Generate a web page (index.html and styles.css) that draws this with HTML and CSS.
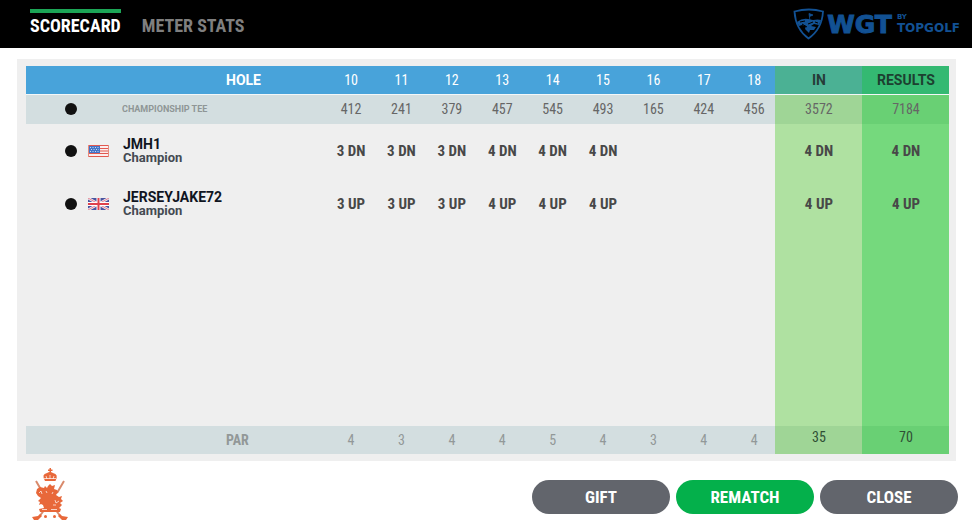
FILE: index.html
```html
<!DOCTYPE html>
<html lang="en">
<head>
    <meta charset="UTF-8">
    <meta name="viewport" content="width=device-width, initial-scale=1.0">
    <title>Scorecard</title>
    <link rel="stylesheet" href="styles.css">
</head>
<body>

    <!-- Top bar -->
    <header class="topbar">
        <nav class="tabs">
            <a class="tab active" href="#scorecard">SCORECARD</a>
            <a class="tab" href="#meter">METER STATS</a>
        </nav>
        <div class="logo">
            <svg class="shield" viewBox="0 0 32 32" width="32" height="32" aria-hidden="true">
                <path d="M1.500 3.500Q16 -.5 30 3.500Q29 21 15.500 30.500Q2.500 21 1.500 3.500Z" fill="none" stroke="#125193" stroke-width="1.800"/>
                <path d="M4 14Q9 10 15 11L20 12Q25 11 28 12L26 17L21 16L18 18L23 19L21 22L17 22L16 25L12 21L13 18L9 17L6 18Z" fill="#125193"/>
                <path d="M7 14L12 13M15 16L20 14M9 16L14 19M22 14L25 15" stroke="#000" stroke-width="1"/>
                <path d="M17 13L16 5.500L20 7L16.500 8.500" fill="#125193" stroke="#125193" stroke-width=".8"/>
            </svg>
            <span class="wgt">WGT</span>
            <span class="by"><small>BY</small>TOPGOLF</span>
        </div>
    </header>

    <!-- Scorecard table -->
    <main class="panel" id="scorecard">
        <table class="card">
            <colgroup>
                <col class="col-label">
                <col class="col-hole" span="9">
                <col class="col-total" span="2">
            </colgroup>
            <thead>
                <tr class="holes">
                    <th class="title">HOLE</th>
                    <th>10</th><th>11</th><th>12</th><th>13</th><th>14</th><th>15</th><th>16</th><th>17</th><th>18</th>
                    <th class="in">IN</th>
                    <th class="results">RESULTS</th>
                </tr>
            </thead>
            <tbody>
                <tr class="tee">
                    <th><div class="who"><span class="dot"></span><span class="tee-name">CHAMPIONSHIP TEE</span></div></th>
                    <td>412</td><td>241</td><td>379</td><td>457</td><td>545</td><td>493</td><td>165</td><td>424</td><td>456</td>
                    <td class="in">3572</td>
                    <td class="results">7184</td>
                </tr>
                <tr class="player">
                    <th>
                        <div class="who">
                            <span class="dot"></span>
                            <svg class="flag" viewBox="0 0 21 12" width="21" height="12" role="img" aria-label="United States">
                                <rect width="21" height="12" fill="#fbeeee"/>
                                <path d="M0 .5H21M0 3.500H21M0 6H21M0 8.500H21M0 11.500H21" stroke="#e2584f"/>
                                <path d="M.5 0V12M20.500 0V12" stroke="#e58a7d"/>
                                <rect x="1" y="1" width="11" height="7" fill="#4274c8"/>
                                <path d="M2 2.500H11M3 4.500H11M2 6.500H11" stroke="#c7d8f3" stroke-dasharray="1 1.500"/>
                            </svg>
                            <div class="name">JMH1<div class="rank">Champion</div></div>
                        </div>
                    </th>
                    <td>3 DN</td><td>3 DN</td><td>3 DN</td><td>4 DN</td><td>4 DN</td><td>4 DN</td><td></td><td></td><td></td>
                    <td class="in">4 DN</td>
                    <td class="results">4 DN</td>
                </tr>
                <tr class="player">
                    <th>
                        <div class="who">
                            <span class="dot"></span>
                            <svg class="flag" viewBox="0 0 21 12" width="21" height="12" role="img" aria-label="United Kingdom">
                                <rect width="21" height="12" fill="#4a549f"/>
                                <path d="M0 0L21 12M21 0L0 12" stroke="#f4e9ef" stroke-width="2.500"/>
                                <path d="M0 0L21 12M21 0L0 12" stroke="#e06a78" stroke-width=".8"/>
                                <path d="M10.500 0V12M0 6H21" stroke="#fff" stroke-width="4"/>
                                <path d="M10.500 0V12M0 6H21" stroke="#e0404c" stroke-width="2"/>
                            </svg>
                            <div class="name">JERSEYJAKE72<div class="rank">Champion</div></div>
                        </div>
                    </th>
                    <td>3 UP</td><td>3 UP</td><td>3 UP</td><td>4 UP</td><td>4 UP</td><td>4 UP</td><td></td><td></td><td></td>
                    <td class="in">4 UP</td>
                    <td class="results">4 UP</td>
                </tr>
                <!-- Empty space down to the par row -->
                <tr class="filler">
                    <td colspan="10"></td>
                    <td class="in"></td>
                    <td class="results"></td>
                </tr>
            </tbody>
            <tfoot>
                <tr class="par">
                    <th class="title">PAR</th>
                    <td>4</td><td>3</td><td>4</td><td>4</td><td>5</td><td>4</td><td>3</td><td>4</td><td>4</td>
                    <td class="in">35</td>
                    <td class="results">70</td>
                </tr>
            </tfoot>
        </table>
    </main>

    <!-- Course crest and buttons -->
    <footer class="actions">
        <svg class="crest" viewBox="0 0 38 54" width="38" height="54" role="img" aria-label="Course crest">
            <g fill="none" stroke="#d98a6c" stroke-width="2">
                <path d="M5 14L12 26M33 14L26 26M14 42L8 50M24 42L30 50"/>
            </g>
            <g fill="#e8683a">
                <path d="M18.500 1h1.500v1.500h1.500v1.500h-1.500v2h-1.500v-2h-1.500v-1.500h1.500z"/>
                <path d="M14 14Q10 7 16 6Q19 4 22 6Q28 7 24.500 14Z"/>
                <path d="M17 19L19 17L21 19L24 18L23 22L26 23L27 25L25 28L28 30L31 29L30 32L32 34L29 36L31 38L28 41L30 42L29 45L9 45L8 42L13 41L12 38L10 37L8 38L9 35L7 34L10 31L7 29L5 26L6 22L9 20L13 21L14 19L16 21Z"/>
                <path d="M1 50L7 49L9 47L11 49L7 53L3 53ZM37 50L31 49L29 47L27 49L31 53L35 53Z"/>
                <circle cx="14.500" cy="49.500" r="1.500"/>
                <circle cx="23.500" cy="49.500" r="1.500"/>
            </g>
            <g fill="none" stroke="#fff" stroke-width=".7">
                <path d="M16 12L15 9M19 12V8M22 12L23 9M13 11.500H25"/>
                <path d="M8 26L10 24L11 27M15 24L16 26M22 25L21 27M24 33L25 36L28 34M22 38L25 38M11 42.500H16M20 42.500H26"/>
            </g>
        </svg>
        <div class="buttons">
            <button class="button" type="button">GIFT</button>
            <button class="button rematch" type="button">REMATCH</button>
            <button class="button" type="button">CLOSE</button>
        </div>
    </footer>

</body>
</html>
```
FILE: styles.css
```css
* {
    box-sizing: border-box;
}

body {
    margin: 0;
    min-height: 100vh;
    display: flex;
    flex-direction: column;
    background: #fff;
    font-family: "Roboto Condensed", "Liberation Sans Narrow", Roboto, sans-serif;
}

/* Top bar */
.topbar {
    height: 48px;
    padding: 0 12px 0 30px;
    background: #000;
    display: flex;
    justify-content: space-between;
}

.tabs {
    display: flex;
    gap: 21px;
    padding-top: 9px;
}

.tab {
    height: 32px;
    border-top: 4px solid transparent;
    color: #7f7f7f;
    font-size: 18px;
    font-weight: bold;
    line-height: 26px;
    text-decoration: none;
}

.tab.active {
    color: #fff;
    border-color: #1ca556;
}

.logo {
    display: flex;
    align-items: center;
    color: #125193;
    font-family: "DejaVu Sans", sans-serif;
    font-weight: bold;
}

.wgt {
    margin: 0 5px 0 2px;
    font-size: 25px;
    line-height: 25px;
    -webkit-text-stroke: 1px #125193;
}

.by {
    font-size: 12px;
    line-height: 14px;
}

.by small {
    display: block;
    font-size: 7px;
    line-height: 7px;
}

/* Scorecard */
.panel {
    flex: 1;
    display: flex;
    margin: 11px 16px 0 17px;
    padding: 7px 7px 7px 9px;
    background: #efefef;
}

.card {
    width: 100%;
    table-layout: fixed;
    border-collapse: collapse;
}

.col-label {
    width: 32%;
}

.col-hole {
    width: 5.46%;
}

.col-total {
    width: 9.43%;
}

.card th,
.card td {
    padding: 0 0 0 9px;
    text-align: center;
}

.card .in,
.card .results {
    padding-left: 1px;
}

.card .title {
    padding-left: 200px;
    text-align: left;
}

.holes {
    height: 28px;
    background: #48a3da;
    color: #fff;
    font-size: 14px;
}

.holes th {
    font-weight: normal;
}

.holes .title,
.holes .in,
.holes .results {
    font-family: Roboto, sans-serif;
    font-weight: bold;
}

.tee {
    height: 30px;
    border-top: 1px solid #f3f7f8;
    background: #d3dee0;
    color: #666;
    font-size: 14px;
}

.player {
    height: 53px;
    color: #484848;
    font-size: 15px;
    font-weight: bold;
}

.par {
    height: 28px;
    background: #d3dee0;
    color: #929898;
    font-size: 14px;
}

.in {
    background: #afe1a1;
}

.results {
    background: #75d97d;
}

.holes .in {
    background: #4bb194;
    color: #263c38;
}

.holes .results {
    background: #34b972;
    color: #1c4030;
}

.tee .in,
.par .in {
    background: #9fd596;
}

.tee .results,
.par .results {
    background: #69d074;
}

.par .in,
.par .results {
    padding-bottom: 7px;
    color: #2f4f35;
}

.card .who {
    display: flex;
    align-items: center;
    padding-left: 30px;
    text-align: left;
}

.dot {
    width: 12px;
    height: 12px;
    border-radius: 50%;
    background: #111;
}

.flag {
    margin: 0 14px 0 11px;
}

.tee-name {
    margin-left: 45px;
    color: #8f9696;
    font-family: Roboto, sans-serif;
    font-size: 9px;
}

.name {
    color: #10151f;
    font-family: Roboto, sans-serif;
    font-size: 14px;
    line-height: 14px;
}

.rank {
    color: #444a52;
    font-size: 13px;
}

/* Bottom bar */
.actions {
    display: flex;
    justify-content: space-between;
    height: 68px;
    padding: 6px 14px 0 31px;
}

.buttons {
    display: flex;
    gap: 6px;
    padding-top: 13px;
}

.button {
    width: 138px;
    height: 34px;
    border: none;
    border-radius: 17px;
    background: #62656c;
    color: #fff;
    font-family: inherit;
    font-size: 17px;
    font-weight: bold;
    cursor: pointer;
}

.rematch {
    background: #04b04b;
}
```
